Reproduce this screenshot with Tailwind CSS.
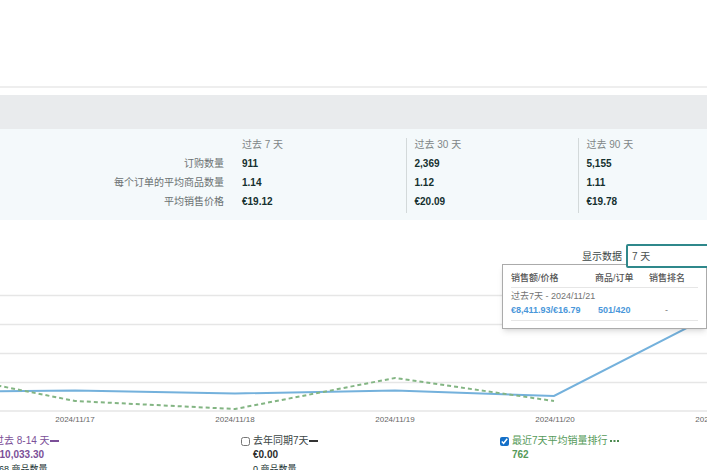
<!DOCTYPE html>
<html lang="zh-CN">
<head>
    <meta charset="UTF-8">
    <meta name="viewport" content="width=device-width, initial-scale=1.0">
    <title>销售数据</title>
    <script src="https://cdn.jsdelivr.net/npm/@tailwindcss/browser@4"></script>
</head>
<body class="h-screen overflow-hidden bg-white font-['Liberation_Sans','Noto_Sans_CJK_SC',sans-serif] text-[10px] text-[#3c4646]">
    <!-- Header -->
    <header class="h-22 border-b-2 border-[#eeeeee]"></header>

    <main>
        <!-- Summary -->
        <section class="mt-[7px] bg-[#f4f9fb]">
            <div class="h-[34px] bg-[#e9ebed]"></div>
            <div class="pt-[9px] pb-[7px]">
                <table class="w-full table-fixed text-left">
                    <colgroup>
                        <col class="w-[234px]">
                        <col class="w-[172px]">
                        <col class="w-[172px]">
                        <col>
                    </colgroup>
                    <thead class="text-[#808687]">
                        <tr class="h-4 align-top leading-[14px]">
                            <td></td>
                            <th scope="col" class="px-2 font-normal">过去 7 天</th>
                            <th scope="col" class="border-l border-[#d3d9da] px-2 font-normal">过去 30 天</th>
                            <th scope="col" class="border-l border-[#d3d9da] px-2 font-normal">过去 90 天</th>
                        </tr>
                    </thead>
                    <tbody class="font-bold leading-[19px] text-[#15302f]">
                        <tr>
                            <th scope="row" class="pr-2.5 text-right font-normal text-[#6b7172]">订购数量</th>
                            <td class="px-2">911</td>
                            <td class="border-l border-[#d3d9da] px-2">2,369</td>
                            <td class="border-l border-[#d3d9da] px-2">5,155</td>
                        </tr>
                        <tr>
                            <th scope="row" class="pr-2.5 text-right font-normal text-[#6b7172]">每个订单的平均商品数量</th>
                            <td class="px-2">1.14</td>
                            <td class="border-l border-[#d3d9da] px-2">1.12</td>
                            <td class="border-l border-[#d3d9da] px-2">1.11</td>
                        </tr>
                        <tr>
                            <th scope="row" class="pr-2.5 pb-0.5 text-right font-normal text-[#6b7172]">平均销售价格</th>
                            <td class="px-2 pb-0.5">€19.12</td>
                            <td class="border-l border-[#d3d9da] px-2 pb-0.5">€20.09</td>
                            <td class="border-l border-[#d3d9da] px-2 pb-0.5">€19.78</td>
                        </tr>
                    </tbody>
                </table>
            </div>
        </section>

        <!-- Toolbar -->
        <div class="relative z-10 flex items-center justify-end gap-1 pt-6">
            <label for="range">显示数据</label>
            <select id="range" class="-mr-0.5 h-6 w-[83px] appearance-none rounded-xs border-2 border-[#2f888b] bg-white px-1 text-[#4a5050]">
                <option>7 天</option>
                <option>30 天</option>
                <option>90 天</option>
            </select>
        </div>

        <!-- Chart -->
        <section class="relative">
            <svg class="block h-36 w-full" viewBox="0 0 707 144" preserveAspectRatio="none" fill="none">
                <path d="M0 27.5H707M0 56.5H707M0 85.5H707M0 114.5H707M0 143H707" stroke="#e6e6e6" stroke-width="1.5"/>
                <path d="M-85 124L75 122.5L235 125.5L395 122.5L554 128L714 46" stroke="#74b1dc" stroke-width="2"/>
                <path d="M-85 101L75 133L235 141L395 110L554 133" stroke="#83b583" stroke-width="2" stroke-dasharray="4 3"/>
            </svg>
            <div class="-ml-[5px] flex text-center text-[8px] leading-4 text-[#666666]">
                <span class="w-[160px] shrink-0">2024/11/17</span>
                <span class="w-[160px] shrink-0">2024/11/18</span>
                <span class="w-[160px] shrink-0">2024/11/19</span>
                <span class="w-[160px] shrink-0">2024/11/20</span>
                <span class="w-[160px] shrink-0">2024/11/21</span>
            </div>

            <!-- Tooltip -->
            <div class="absolute -top-1 right-0 w-[205px] border border-[#ababab] bg-white px-2 pt-1 pb-[7px] text-[9px] shadow-md">
                <table class="w-full table-fixed text-left">
                    <colgroup>
                        <col class="w-[84px]">
                        <col class="w-[54px]">
                        <col>
                    </colgroup>
                    <thead class="border-b border-[#e6e6e6] leading-[18px] text-[#555555]">
                        <tr>
                            <th scope="col" class="font-medium">销售额/价格</th>
                            <th scope="col" class="font-medium">商品/订单</th>
                            <th scope="col" class="font-medium">销售排名</th>
                        </tr>
                    </thead>
                    <tbody class="border-b border-[#e6e6e6] text-[#4a97da]">
                        <tr class="leading-4 text-[#737373]">
                            <td colspan="3">过去7天 - 2024/11/21</td>
                        </tr>
                        <tr class="font-bold leading-3">
                            <td class="pb-1">€8,411.93/€16.79</td>
                            <td class="pb-1 pl-[3px]">501/420</td>
                            <td class="pb-1 pl-4 font-normal text-[#737373]">-</td>
                        </tr>
                    </tbody>
                </table>
            </div>
        </section>

        <!-- Legend -->
        <section class="-ml-[18px] grid grid-cols-[259px_259px_1fr] pt-1.5 leading-[14px]">
            <div class="flex gap-[3px] text-[#7b4f98]">
                <input id="prev" type="checkbox" checked class="mt-[3px] size-[9px] accent-[#1570c8]">
                <div>
                    <label for="prev" class="flex items-center whitespace-nowrap">过去 8-14 天<span class="h-0.5 w-[9px] bg-[#7b4f98]"></span></label>
                    <p class="font-bold">€10,033.30</p>
                    <p class="text-[9px] text-[#15302f]">468 商品数量</p>
                </div>
            </div>
            <div class="flex gap-[3px]">
                <input id="year" type="checkbox" class="mt-[3px] size-[9px] accent-[#1570c8]">
                <div>
                    <label for="year" class="flex items-center whitespace-nowrap">去年同期7天<span class="h-0.5 w-[9px] bg-[#333333]"></span></label>
                    <p class="font-bold text-[#2b2b2b]">€0.00</p>
                    <p class="text-[9px] text-[#15302f]">0 商品数量</p>
                </div>
            </div>
            <div class="flex gap-[3px] text-[#559a58]">
                <input id="rank" type="checkbox" checked class="mt-[3px] size-[9px] accent-[#1570c8]">
                <div>
                    <label for="rank" class="flex items-center whitespace-nowrap">最近7天平均销量排行<svg class="ml-0.5 h-0.5 w-[9px]" viewBox="0 0 9 2"><path d="M0 1H9" stroke="#4d8a50" stroke-width="2" stroke-dasharray="2 1.5"/></svg></label>
                    <p class="font-bold">762</p>
                </div>
            </div>
        </section>
    </main>
</body>
</html>
